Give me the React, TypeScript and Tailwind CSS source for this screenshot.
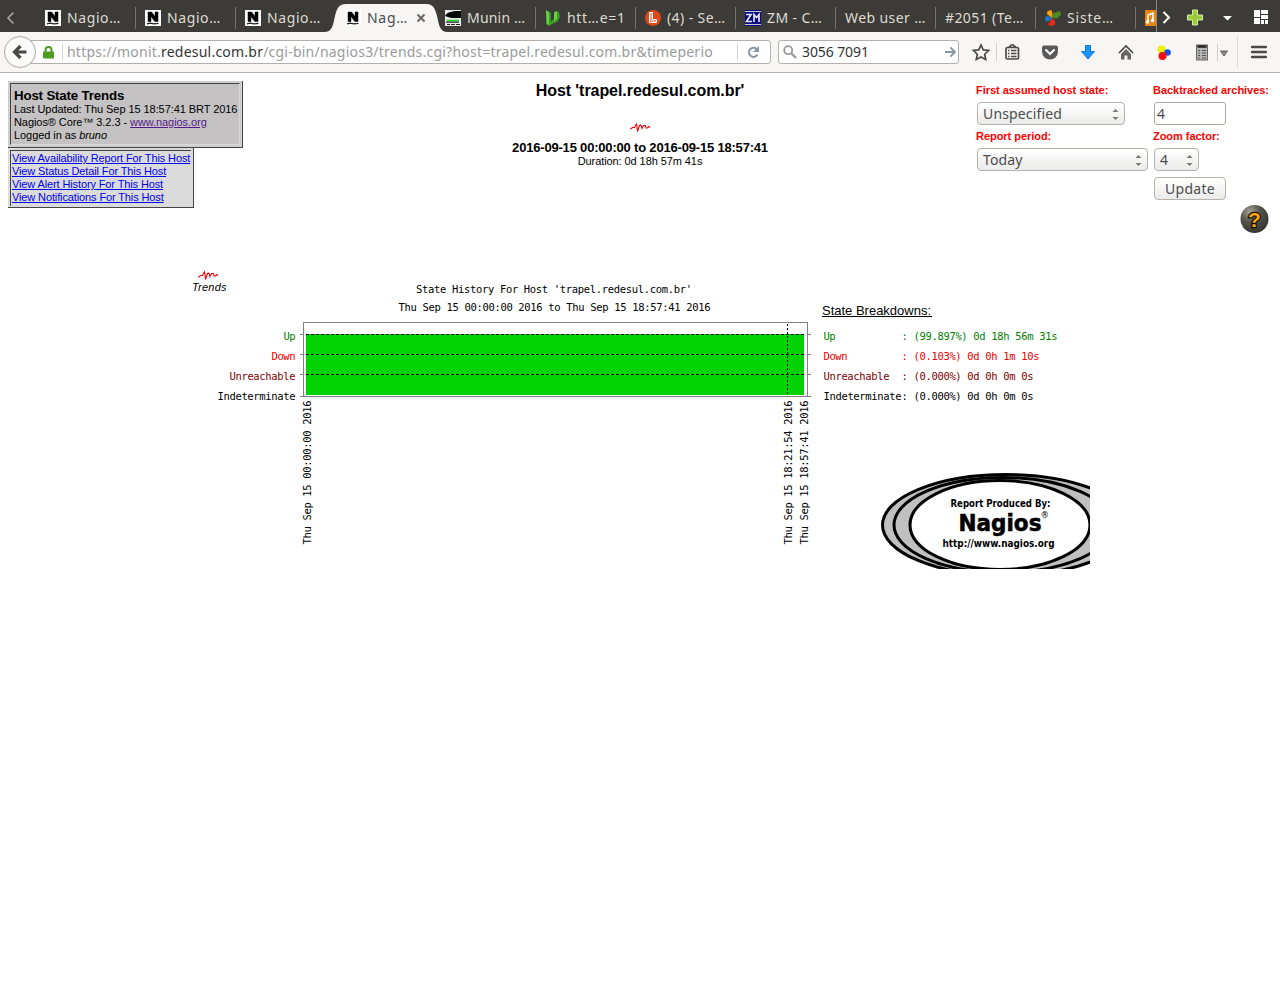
import React from "react";

const UI = "font-['Noto_Sans',sans-serif]";

function NFavicon() {
  return (
    <svg width="16" height="16" viewBox="0 0 16 16" className="shrink-0">
      <rect width="16" height="16" fill="#fff" />
      <path d="M3 2h3.600l3.400 4.500V2h3v9.500h-3.200L6 6.500V11.500H3z" fill="#000" stroke="#000" strokeWidth="0.500" />
      <path d="M2 13.800l3-.6 4 .6 4.500-.4" stroke="#222" strokeWidth="1.200" fill="none" />
    </svg>
  );
}

function MuninIcon() {
  return (
    <svg width="16" height="16" viewBox="0 0 16 16" className="shrink-0">
      <rect width="16" height="16" fill="#e8e8e8" />
      <path d="M0 6C3 1 9 1 16 1v7H6z" fill="#000" />
      <path d="M2 10.500h12" stroke="#1fe01f" strokeWidth="1.600" />
      <path d="M1 12.200h13M2 14.500h3M6 14.500h4M11 14.500h4" stroke="#222" strokeWidth="1.200" />
    </svg>
  );
}

function LeafIcon() {
  return (
    <svg width="16" height="16" viewBox="0 0 16 16" className="shrink-0">
      <path d="M1 0l5 3v8l3-2V3l2-2 3 1 1 5-3 5-5 2-3 2-3-2z" fill="#3a9c25" />
      <path d="M1 0l3 2.500V15l-2-1zM9 3l2-2 1 1v7l-3 2z" fill="#6bd046" />
    </svg>
  );
}

function LIcon() {
  return (
    <svg width="16" height="16" viewBox="0 0 16 16" className="shrink-0">
      <circle cx="8" cy="8" r="8" fill="#dd4814" />
      <path d="M4.500 2.500v10h7v-3h-4v-7zM6 2.500v8.500h5.500" stroke="#fff" strokeWidth="1" fill="none" />
    </svg>
  );
}

function ZmIcon() {
  return (
    <svg width="16" height="16" viewBox="0 0 16 16" className="shrink-0">
      <rect width="16" height="16" fill="#0a0a80" />
      <path d="M0 1.500h16M0 14.500h16" stroke="#c8c8d8" />
      <path d="M1 4.500h5L1.500 11.500H7M9 12V4.500l2.500 3 2.500-3V12" stroke="#e4e4f0" strokeWidth="1.700" fill="none" />
    </svg>
  );
}

function PinwheelIcon() {
  return (
    <svg width="16" height="16" viewBox="0 0 16 16" className="shrink-0">
      <path d="M7 8L2 4 2.500 1l4-1 1 4z" fill="#f6a315" />
      <path d="M7 8l1.500-5L15 1l1 4-4 3.500z" fill="#4c8a22" />
      <path d="M7 8L2 5.500 0 8l.5 3.500L4 11z" fill="#1c79c9" />
      <path d="M7 8l-4 6.500L5.500 16 10 15V11z" fill="#e12a1a" />
    </svg>
  );
}

function Pulse() {
  return (
    <path
      d="M0.500 6.500V6L2.500 4.500H4.500L5.500 2.500 6.500 1 7 3.500 7.500 8.500 8.500 5.500 9.500 2.500 10.500 2 11.500 3.500 12 5.500 13.500 2.500 15.500 2.500 16 5 17.500 5 18.500 3.500 20 4.500"
      stroke="#f00000"
      strokeWidth="1.100"
      fill="none"
    />
  );
}

type TabData = { icon?: React.ReactNode; label: string; spacing?: string };

function Tab({ icon, label, spacing = "tracking-[0.4px]" }: TabData) {
  return (
    <div className="flex h-[32px] w-[100px] shrink-0 items-center pt-[3px]">
      <div className="flex w-[99px] items-center gap-[6px] overflow-hidden pl-[9px]">
        {icon}
        <span className={`whitespace-nowrap text-[14px] leading-[20px] text-[#dfdbd2] ${spacing}`}>{label}</span>
      </div>
      <div className="h-[22px] w-px bg-[#73726e]" />
    </div>
  );
}

function TabBar() {
  return (
    <div className={`relative flex h-[32px] bg-[#3c3b37] ${UI}`}>
      <div className="flex w-[36px] items-center pl-[6px] pt-[4px]">
        <svg width="10" height="14" viewBox="0 0 10 14">
          <path d="M7.500 1.500L2 7l5.500 5.500" stroke="#aaa9a5" strokeWidth="1.600" fill="none" />
        </svg>
      </div>
      <Tab icon={<NFavicon />} label="Nagio…" spacing="tracking-[0.6px]" />
      <Tab icon={<NFavicon />} label="Nagio…" spacing="tracking-[0.6px]" />
      <div className="flex h-[32px] w-[100px] shrink-0 items-center gap-[6px] pl-[9px] pt-[3px]">
        <NFavicon />
        <span className="whitespace-nowrap text-[14px] leading-[20px] tracking-[0.6px] text-[#dfdbd2]">Nagio…</span>
      </div>
      <div className="relative h-[32px] w-[100px] shrink-0">
        <svg className="absolute left-[-12px] top-[4px]" width="124" height="28" viewBox="0 0 124 28">
          <path d="M0 28C9 28 9 20 11 12 13 4 15 0 22 0H102C109 0 111 4 113 12 115 20 115 28 124 28z" fill="#f7f6f5" />
        </svg>
        <div className="relative flex h-[32px] items-center gap-[6px] pl-[9px] pt-[3px]">
          <NFavicon />
          <span className="w-[43px] whitespace-nowrap text-[14px] leading-[20px] tracking-[0.7px] text-[#4c4c4c]">Nag…</span>
          <svg width="10" height="10" viewBox="0 0 10 10">
            <path d="M1.500 1.500l7 7M8.500 1.500l-7 7" stroke="#686868" strokeWidth="2" />
          </svg>
        </div>
      </div>
      <Tab icon={<MuninIcon />} label="Munin …" spacing="tracking-[0.2px]" />
      <Tab icon={<LeafIcon />} label="htt…e=1" spacing="tracking-[0.7px]" />
      <Tab icon={<LIcon />} label="(4) - Se…" />
      <Tab icon={<ZmIcon />} label="ZM - C…" />
      <Tab label="Web user …" />
      <Tab label="#2051 (Te…" />
      <Tab icon={<PinwheelIcon />} label="Siste…" spacing="tracking-[0.8px]" />
      <div className="flex w-[21px] items-center border-r border-[#8a8985] pl-[9px] pt-[3px]">
        <svg width="11" height="16" viewBox="0 0 11 16">
          <rect width="11" height="16" fill="#e8850c" />
          <path d="M3 12V5l5-2v7" stroke="#fff" strokeWidth="1.500" fill="none" />
          <circle cx="2.500" cy="12" r="1.800" fill="#fff" />
          <circle cx="7.500" cy="10.500" r="1.800" fill="#fff" />
        </svg>
      </div>
      <svg width="123" height="32" viewBox="0 0 123 32" className="shrink-0">
        <path d="M6.500 12l5.500 5.500L6.500 23" stroke="#fff" strokeWidth="2" fill="none" />
        <path d="M35.500 10h5v5h5v5h-5v5h-5v-5h-5v-5h5z" fill="#9ccb3f" stroke="#d7eda8" strokeWidth="1" />
        <path d="M66 16h9l-4.500 4.500z" fill="#fff" />
        <path d="M97 10h6v7h-6zM104 10h7v4h-7zM104 15h7v4h-7zM97 18h6v6h-6zM104 20h3v4h-3zM108 20h3v4h-3z" fill="#fff" />
      </svg>
    </div>
  );
}

function ToolbarIcons() {
  return (
    <svg width="321" height="40" viewBox="959 32 321 40" className="shrink-0">
      <path d="M981 45l2.300 4.900 5.300.6-3.900 3.700 1 5.300-4.700-2.600-4.700 2.600 1-5.300-3.900-3.700 5.300-.6z" fill="none" stroke="#4a4a4a" strokeWidth="1.700" />
      <path d="M996.500 43v18" stroke="#d0d0d0" />
      <rect x="1006" y="47.500" width="12.500" height="11.500" rx="1.500" fill="none" stroke="#4a4a4a" strokeWidth="1.700" />
      <path d="M1008.500 46.500h2l.5-1.500h2.500l.5 1.500h2" stroke="#4a4a4a" strokeWidth="1.500" fill="none" />
      <path d="M1008 50.500h1.500M1011 50.500h5.500M1008 53.500h1.500M1011 53.500h5.500M1008 56.500h1.500M1011 56.500h5.500" stroke="#4a4a4a" strokeWidth="1.300" fill="none" />
      <path d="M1042 47.500a2 2 0 012-2h12a2 2 0 012 2v4a8 8 0 01-16 0z" fill="#5a5a5a" />
      <path d="M1046 50l4 4 4-4" fill="none" stroke="#fff" strokeWidth="2" strokeLinecap="round" />
      <path d="M1085.500 45.500h5v6h4l-6.500 7.500-6.500-7.500h4z" fill="#1b95f5" stroke="#0c7be0" />
      <path d="M1119 53l7-7 7 7" fill="none" stroke="#4a4a4a" strokeWidth="1.700" />
      <path d="M1121 54l5-5 5 5v5.500h-3.500v-4h-3v4h-3.500z" fill="#666" />
      <circle cx="1161.500" cy="49.500" r="4" fill="#f0f000" />
      <circle cx="1167.500" cy="52.500" r="3.300" fill="#1c4fe8" />
      <circle cx="1162.500" cy="56" r="4" fill="#f01010" />
      <rect x="1196.500" y="45" width="11" height="15" fill="#b5b5b5" stroke="#666" />
      <path d="M1197.500 46.500h9" stroke="#222" strokeWidth="2.500" />
      <path d="M1198 50.500h2M1198 53h2M1198 55.500h2M1198 58h2M1202 50.500h4M1202 53h4M1202 55.500h4M1202 58h4" stroke="#555" />
      <path d="M1217.500 44v17" stroke="#d0d0d0" />
      <path d="M1220.500 51h7l-3.500 5z" fill="#888" stroke="#666" />
      <path d="M1237.500 36v32" stroke="#dcdcdc" />
      <path d="M1252.200 47h13.600M1252.200 52h13.600M1252.200 57h13.600" stroke="#4a4a4a" strokeWidth="2.600" strokeLinecap="round" />
    </svg>
  );
}

function NavBar() {
  return (
    <div className={`flex h-[41px] items-center border-b border-[#b6b4b1] bg-[#f7f6f5] ${UI}`}>
      <div className="relative z-10 ml-[4px] flex h-[32px] w-[32px] shrink-0 items-center justify-center rounded-full border border-[#aaa9a6] bg-[#fbfbfa]">
        <svg width="16" height="16" viewBox="0 0 16 16">
          <path d="M14.500 8H4M8.500 2L2.500 8l6 6" stroke="#4a4a4a" strokeWidth="3.200" fill="none" />
        </svg>
      </div>
      <div className="ml-[-8px] flex h-[24px] w-[743px] shrink-0 items-center rounded-r-[3px] border border-[#b1aeab] bg-white pl-[14px]">
        <svg width="11" height="13" viewBox="0 0 11 13" className="shrink-0">
          <path d="M2.500 6V4a3 3 0 016 0v2" stroke="#4c9c22" strokeWidth="2" fill="none" />
          <rect x="0" y="5.500" width="11" height="7" rx="1" fill="#4c9c22" />
        </svg>
        <div className="ml-[8px] h-[16px] w-px shrink-0 bg-[#d4d4d4]" />
        <div className="ml-[4px] w-[671px] whitespace-nowrap text-[14px] leading-[20px] tracking-[0.222px] text-[#9a9a9a]">
          https://monit.<span className="text-[#333]">redesul.com.br</span>/cgi-bin/nagios3/trends.cgi?host=trapel.redesul.com.br&amp;timeperio
        </div>
        <div className="h-[16px] w-px shrink-0 bg-[#d4d4d4]" />
        <svg width="32" height="16" viewBox="0 0 32 16" className="shrink-0">
          <path d="M19.500 10.500a4.500 4.500 0 11-.5-5" stroke="#8796a3" strokeWidth="2" fill="none" />
          <path d="M21 2v6h-6z" fill="#8796a3" />
        </svg>
      </div>
      <div className="ml-[7px] flex h-[24px] w-[181px] shrink-0 items-center rounded-[3px] border border-[#b1aeab] bg-white pl-[4px]">
        <svg width="14" height="14" viewBox="0 0 14 14" className="shrink-0">
          <circle cx="5.200" cy="5.200" r="4" stroke="#999" strokeWidth="1.800" fill="none" />
          <path d="M8.500 8.500l4.500 4.500" stroke="#999" strokeWidth="2.400" />
        </svg>
        <span className="ml-[5px] w-[143px] text-[14px] leading-[20px] tracking-[-0.1px] text-[#333]">3056 7091</span>
        <svg width="11" height="12" viewBox="0 0 11 12" className="shrink-0">
          <path d="M0 6h9M5.500 1.500L10 6l-4.500 4.500" stroke="#8796a3" strokeWidth="1.800" fill="none" />
        </svg>
      </div>
      <ToolbarIcons />
    </div>
  );
}

function Arrows() {
  return (
    <svg width="7" height="13" viewBox="0 0 7 13" className="mt-[2px]">
      <path d="M0.500 4h6L3.500 1zM0.500 9h6L3.500 12z" fill="#777" />
    </svg>
  );
}

function Select({ width, children }: { width: string; children: React.ReactNode }) {
  return (
    <div className={`flex h-[23px] items-center justify-between rounded-[4px] border border-[#b5b2ae] bg-linear-to-b from-white to-[#ebebea] pl-[5px] pr-[5px] text-[14px] leading-[20px] tracking-[0.15px] text-[#4c4c4c] ${width} ${UI}`}>
      <span>{children}</span>
      <Arrows />
    </div>
  );
}

function Label({ children }: { children: React.ReactNode }) {
  return <div className="h-[13px] whitespace-nowrap text-[11px] font-bold leading-[13px] tracking-[-0.04px] text-[#f00]">{children}</div>;
}

function Header() {
  return (
    <div className="flex h-[188px] px-[8px] pt-[8px]">
      <div className="w-[404px] shrink-0 text-[11px] leading-[13px] text-black">
        <div className="h-[67px] w-[235px] border-b border-r border-[#444] bg-[#cecece] pb-[2px] pl-[2px] pr-[2px] pt-[2px]">
          <div className="h-[62px] border border-b-[#d8d8d8] border-l-[#444] border-r-[#d8d8d8] border-t-[#444] bg-[#c4c2c2] pl-[3px] pt-[4px] tracking-[-0.07px]">
            <div className="h-[15px] text-[13.3px] font-bold leading-[16px] tracking-[-0.17px]">Host State Trends</div>
            <div className="whitespace-nowrap">Last Updated: Thu Sep 15 18:57:41 BRT 2016</div>
            <div>Nagios® Core™ 3.2.3 - <a className="text-[#551a8b] underline">www.nagios.org</a></div>
            <div>Logged in as <i>bruno</i></div>
          </div>
        </div>
        <div className="h-[60px] w-[186px] border-b border-r border-[#444] bg-[#dbdbdb] pl-[2px] pt-[2px]">
          <div className="h-[56px] w-[181px] whitespace-nowrap border-l border-t border-[#444] pl-px pt-px tracking-[-0.12px] text-[#00e] underline">
            <div>View Availability Report For This Host</div>
            <div>View Status Detail For This Host</div>
            <div>View Alert History For This Host</div>
            <div>View Notifications For This Host</div>
          </div>
        </div>
      </div>
      <div className="flex w-[456px] shrink-0 flex-col items-center text-black">
        <div className="mt-px h-[41px] text-[16px] font-bold leading-[18px] tracking-[-0.06px]">Host 'trapel.redesul.com.br'</div>
        <svg width="21" height="10" viewBox="0 0 21 10"><Pulse /></svg>
        <div className="mt-[7px] text-[13px] font-bold leading-[15px] tracking-[-0.19px]">2016-09-15 00:00:00 to 2016-09-15 18:57:41</div>
        <div className="text-[11px] leading-[13px] tracking-[-0.08px]">Duration: 0d 18h 57m 41s</div>
      </div>
      <div className="ml-[108px] flex w-[296px] shrink-0 flex-col">
        <div className="grid grid-cols-[177px_119px] pt-[3px]">
          <Label>First assumed host state:</Label>
          <Label>Backtracked archives:</Label>
          <div className="pb-[5px] pl-px pt-[5px]"><Select width="w-[148px]">Unspecified</Select></div>
          <div className="pb-[5px] pl-px pt-[5px]">
            <div className={`h-[23px] w-[72px] rounded-[3px] border border-[#aaa7a3] bg-white pl-[2px] text-[14px] leading-[22px] text-[#4c4c4c] ${UI}`}>4</div>
          </div>
          <Label>Report period:</Label>
          <Label>Zoom factor:</Label>
          <div className="pl-px pt-[5px]"><Select width="w-[171px]">Today</Select></div>
          <div className="pl-px pt-[5px]"><Select width="w-[45px]">4</Select></div>
          <div />
          <div className="pl-px pt-[6px]">
            <div className={`h-[23px] w-[72px] rounded-[4px] border border-[#b5b2ae] bg-linear-to-b from-white to-[#ebebea] text-center text-[14px] leading-[21px] tracking-[0.3px] text-[#4c4c4c] ${UI}`}>Update</div>
          </div>
        </div>
        <svg width="30" height="30" viewBox="0 0 30 30" className="ml-[263px] mt-[4px]">
          <defs>
            <radialGradient id="orb" cx="0.350" cy="0.250" r="0.800">
              <stop offset="0" stopColor="#a5a59c" />
              <stop offset="0.450" stopColor="#55544c" />
              <stop offset="1" stopColor="#33332d" />
            </radialGradient>
          </defs>
          <circle cx="15.500" cy="15" r="14" fill="url(#orb)" />
          <text x="15.500" y="22.500" textAnchor="middle" fontFamily="Liberation Sans" fontWeight="bold" fontSize="21" fill="#ffa500" stroke="#111" strokeWidth="2.500" paintOrder="stroke">?</text>
        </svg>
      </div>
    </div>
  );
}

function Mono({ x, y, n, fill = "#000", rotate = false, children }: { x: number; y: number; n: number; fill?: string; rotate?: boolean; children: string }) {
  return (
    <text
      x={rotate ? 0 : x}
      y={rotate ? 0 : y}
      transform={rotate ? `translate(${x} ${y}) rotate(-90)` : undefined}
      fontFamily="DejaVu Sans Mono"
      fontSize="10.500"
      textLength={n * 6}
      lengthAdjust="spacing"
      fill={fill}
      xmlSpace="preserve"
    >
      {children}
    </text>
  );
}

const states = [
  { label: "Up", value: ": (99.897%) 0d 18h 56m 31s", color: "#008000", y: 340 },
  { label: "Down", value: ": (0.103%) 0d 0h 1m 10s", color: "#f00000", y: 360 },
  { label: "Unreachable", value: ": (0.000%) 0d 0h 0m 0s", color: "#800000", y: 380 },
  { label: "Indeterminate", value: ": (0.000%) 0d 0h 0m 0s", color: "#000000", y: 400 },
];

function Chart() {
  return (
    <svg width="900" height="300" viewBox="190 269 900 300" className="mx-auto mt-[8px] block">
      <g transform="translate(198 271)"><Pulse /></g>
      <text x="192" y="291" fontFamily="Liberation Sans" fontStyle="italic" fontSize="11" textLength="34.500">Trends</text>
      <Mono x={416} y={293} n={46}>State History For Host 'trapel.redesul.com.br'</Mono>
      <Mono x={398.500} y={311} n={52}>Thu Sep 15 00:00:00 2016 to Thu Sep 15 18:57:41 2016</Mono>
      <g shapeRendering="crispEdges">
        <rect x="306" y="334" width="498" height="61" fill="#00d300" />
        <path d="M303.500 322.500H807.500V396.500M303.500 322V396.500M300 396.500H811M300 334.500h4M300 354.500h4M300 374.500h4M807 334.500h4M807 354.500h4M807 374.500h4" stroke="#808080" fill="none" />
        <path d="M306 334.500H804M306 354.500H804M306 374.500H804" stroke="#000" strokeDasharray="3 2" />
        <path d="M787.500 324V395" stroke="#000" strokeDasharray="2 2" />
      </g>
      {states.map((s) => (
        <React.Fragment key={s.label}>
          <Mono x={295.500 - s.label.length * 6} y={s.y} n={s.label.length} fill={s.color}>{s.label}</Mono>
          <Mono x={823.500} y={s.y} n={s.label.length} fill={s.color}>{s.label}</Mono>
          <Mono x={901.500} y={s.y} n={s.value.length} fill={s.color}>{s.value}</Mono>
        </React.Fragment>
      ))}
      <text x="822" y="315" fontFamily="Liberation Sans" fontSize="13" textLength="109">State Breakdowns:</text>
      <path d="M822 316.500H932" stroke="#000" />
      <Mono x={311} y={544.500} n={24} rotate>Thu Sep 15 00:00:00 2016</Mono>
      <Mono x={792} y={544.500} n={24} rotate>Thu Sep 15 18:21:54 2016</Mono>
      <Mono x={808} y={544.500} n={24} rotate>Thu Sep 15 18:57:41 2016</Mono>
      <g stroke="#000" strokeWidth="3">
        <ellipse cx="1006" cy="525" rx="123.500" ry="50.500" fill="#c0c0c0" />
        <ellipse cx="1003" cy="525" rx="109" ry="47.500" fill="#c0c0c0" />
        <ellipse cx="1000" cy="525" rx="90" ry="44.500" fill="#fff" />
      </g>
      <g fontFamily="DejaVu Sans" fontWeight="bold">
        <text x="950.500" y="506.500" fontSize="10" textLength="100" lengthAdjust="spacingAndGlyphs">Report Produced By:</text>
        <text x="958.500" y="530.500" fontSize="23" textLength="83" lengthAdjust="spacingAndGlyphs" stroke="#000" strokeWidth="0.600">Nagios</text>
        <text x="1040.500" y="518" fontSize="8.500" fontWeight="400">®</text>
        <text x="942.500" y="546.500" fontSize="10" textLength="112" lengthAdjust="spacingAndGlyphs">http://www.nagios.org</text>
      </g>
    </svg>
  );
}

export default function App() {
  return (
    <div className="h-[1000px] w-[1280px] overflow-hidden bg-white font-['Liberation_Sans',sans-serif]">
      <TabBar />
      <NavBar />
      <Header />
      <Chart />
    </div>
  );
}
